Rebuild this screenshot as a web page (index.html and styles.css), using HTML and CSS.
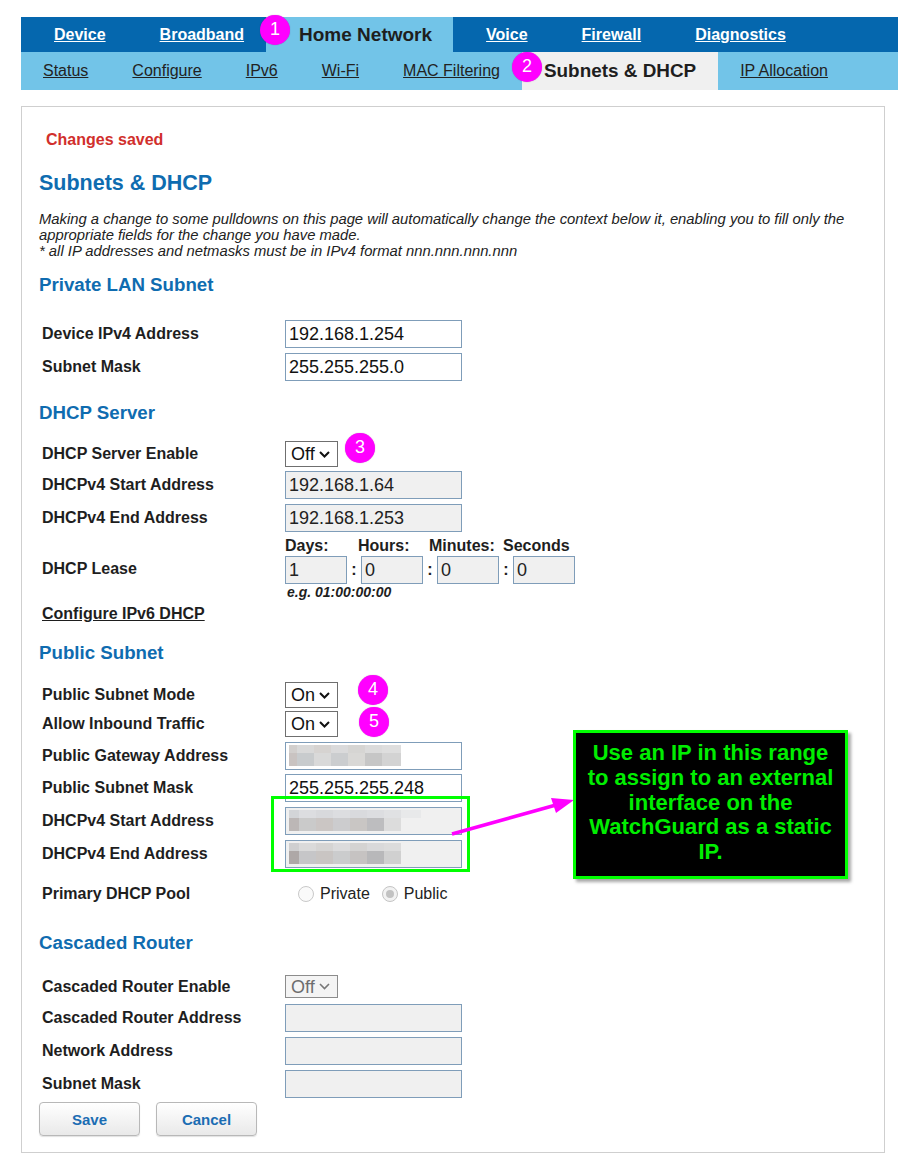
FILE: index.html
```html
<!DOCTYPE html>
<html>
<head>
<meta charset="utf-8">
<title>Subnets &amp; DHCP</title>
<link rel="stylesheet" href="styles.css">
</head>
<body>
<div class="page">
  <nav class="topnav">
    <a class="tn" href="#">Device</a>
    <a class="tn tn-pre" href="#">Broadband</a>
    <span class="tn tn-active">Home Network</span>
    <a class="tn" href="#">Voice</a>
    <a class="tn" href="#">Firewall</a>
    <a class="tn" href="#">Diagnostics</a>
  </nav>
  <nav class="subnav">
    <a class="sn" href="#">Status</a>
    <a class="sn" href="#">Configure</a>
    <a class="sn" href="#">IPv6</a>
    <a class="sn" href="#">Wi-Fi</a>
    <a class="sn" href="#">MAC Filtering</a>
    <span class="sn sn-active">Subnets &amp; DHCP</span>
    <a class="sn" href="#">IP Allocation</a>
  </nav>

  <main class="panel">
    <div class="msg">Changes saved</div>
    <h1 class="title">Subnets &amp; DHCP</h1>
    <p class="intro">Making a change to some pulldowns on this page will automatically change the context below it, enabling you to fill only the appropriate fields for the change you have made.<br>* all IP addresses and netmasks must be in IPv4 format nnn.nnn.nnn.nnn</p>

    <h2 class="sh sh-private">Private LAN Subnet</h2>
    <div class="row row-first1">
      <div class="lbl">Device IPv4 Address</div>
      <div class="inp">192.168.1.254</div>
    </div>
    <div class="row">
      <div class="lbl">Subnet Mask</div>
      <div class="inp">255.255.255.0</div>
    </div>

    <h2 class="sh sh-dhcp">DHCP Server</h2>
    <div class="row row-first2">
      <div class="lbl">DHCP Server Enable</div>
      <div class="sel">Off<svg class="chev" width="11" height="7" viewBox="0 0 11 7"><polyline points="1,1 5.5,5.5 10,1" fill="none" stroke="#111" stroke-width="2"/></svg></div>
    </div>
    <div class="row row-g4">
      <div class="lbl">DHCPv4 Start Address</div>
      <div class="inp dis">192.168.1.64</div>
    </div>
    <div class="row">
      <div class="lbl">DHCPv4 End Address</div>
      <div class="inp dis">192.168.1.253</div>
    </div>
    <div class="row">
      <div class="lbl">DHCP Lease</div>
      <div class="lease">
        <div class="lease-heads">
          <span class="lh lh-d">Days:</span><span class="lh lh-h">Hours:</span><span class="lh lh-m">Minutes:</span><span class="lh">Seconds</span>
        </div>
        <div class="lease-inputs">
          <div class="inp dis small">1</div><span class="colon">:</span>
          <div class="inp dis small">0</div><span class="colon">:</span>
          <div class="inp dis small">0</div><span class="colon">:</span>
          <div class="inp dis small">0</div>
        </div>
        <div class="eg">e.g. 01:00:00:00</div>
      </div>
    </div>
    <div class="cfg"><a href="#">Configure IPv6 DHCP</a></div>

    <h2 class="sh sh-public">Public Subnet</h2>
    <div class="row row-first3">
      <div class="lbl">Public Subnet Mode</div>
      <div class="sel">On<svg class="chev" width="11" height="7" viewBox="0 0 11 7"><polyline points="1,1 5.5,5.5 10,1" fill="none" stroke="#111" stroke-width="2"/></svg></div>
    </div>
    <div class="row row-g3">
      <div class="lbl">Allow Inbound Traffic</div>
      <div class="sel">On<svg class="chev" width="11" height="7" viewBox="0 0 11 7"><polyline points="1,1 5.5,5.5 10,1" fill="none" stroke="#111" stroke-width="2"/></svg></div>
    </div>
    <div class="row row-g5">
      <div class="lbl">Public Gateway Address</div>
      <div class="inp">
        <svg class="mosaic" width="112" height="21" viewBox="0 0 112 21">
          <rect x="0" y="0" width="8" height="8" fill="#d2cfcd"/><rect x="8" y="0" width="17" height="8" fill="#d9d9d9"/><rect x="25" y="0" width="17" height="8" fill="#d6d3d1"/><rect x="42" y="0" width="17" height="8" fill="#dadadb"/><rect x="59" y="0" width="17" height="8" fill="#d6d5d3"/><rect x="76" y="0" width="17" height="8" fill="#dbdbdb"/><rect x="93" y="0" width="19" height="8" fill="#dedede"/>
          <rect x="0" y="8" width="8" height="13" fill="#c9c3c1"/><rect x="8" y="8" width="17" height="13" fill="#c8cbcd"/><rect x="25" y="8" width="17" height="13" fill="#d9d9d9"/><rect x="42" y="8" width="17" height="13" fill="#cbcdcf"/><rect x="59" y="8" width="17" height="13" fill="#d9d8d6"/><rect x="76" y="8" width="17" height="13" fill="#c6c6c6"/><rect x="93" y="8" width="19" height="13" fill="#d3d3d3"/>
        </svg>
      </div>
    </div>
    <div class="row row-g4">
      <div class="lbl">Public Subnet Mask</div>
      <div class="inp">255.255.255.248</div>
    </div>
    <div class="row">
      <div class="lbl">DHCPv4 Start Address</div>
      <div class="inp dis">
        <svg class="mosaic" width="132" height="21" viewBox="0 0 132 21">
          <rect x="0" y="0" width="10" height="8" fill="#d3d5d8"/><rect x="10" y="0" width="17" height="8" fill="#dcdde0"/><rect x="27" y="0" width="17" height="8" fill="#d8d9dc"/><rect x="44" y="0" width="17" height="8" fill="#dcdde0"/><rect x="61" y="0" width="17" height="8" fill="#d9dadd"/><rect x="78" y="0" width="17" height="8" fill="#dcdde0"/><rect x="95" y="0" width="17" height="8" fill="#e0e1e3"/><rect x="112" y="0" width="20" height="8" fill="#e8e9ea"/>
          <rect x="0" y="8" width="10" height="13" fill="#bcb7b6"/><rect x="10" y="8" width="17" height="13" fill="#cacaca"/><rect x="27" y="8" width="17" height="13" fill="#cbc6c4"/><rect x="44" y="8" width="17" height="13" fill="#ccccce"/><rect x="61" y="8" width="17" height="13" fill="#c9c6c4"/><rect x="78" y="8" width="17" height="13" fill="#bdbdbf"/><rect x="95" y="8" width="17" height="13" fill="#dcdcdc"/>
        </svg>
      </div>
    </div>
    <div class="row">
      <div class="lbl">DHCPv4 End Address</div>
      <div class="inp dis">
        <svg class="mosaic" width="112" height="21" viewBox="0 0 112 21">
          <rect x="0" y="0" width="10" height="8" fill="#cfcfd0"/><rect x="10" y="0" width="17" height="8" fill="#dadada"/><rect x="27" y="0" width="17" height="8" fill="#d5d4d3"/><rect x="44" y="0" width="17" height="8" fill="#dbdbdc"/><rect x="61" y="0" width="17" height="8" fill="#d4d3d2"/><rect x="78" y="0" width="17" height="8" fill="#d9d9da"/><rect x="95" y="0" width="17" height="8" fill="#dcdcdc"/>
          <rect x="0" y="8" width="10" height="13" fill="#aea8a7"/><rect x="10" y="8" width="17" height="13" fill="#c6c6c8"/><rect x="27" y="8" width="17" height="13" fill="#c9c5c3"/><rect x="44" y="8" width="17" height="13" fill="#cbcccd"/><rect x="61" y="8" width="17" height="13" fill="#c6c3c2"/><rect x="78" y="8" width="17" height="13" fill="#b8b8ba"/><rect x="95" y="8" width="17" height="13" fill="#d0d0d0"/>
        </svg>
      </div>
    </div>
    <div class="row row-pool">
      <div class="lbl">Primary DHCP Pool</div>
      <div class="pool">
        <span class="radio"></span><span class="rtext">Private</span>
        <span class="radio checked"></span><span class="rtext">Public</span>
      </div>
    </div>

    <h2 class="sh sh-casc">Cascaded Router</h2>
    <div class="row row-first4">
      <div class="lbl">Cascaded Router Enable</div>
      <div class="sel sel-dis">Off<svg class="chev" width="11" height="7" viewBox="0 0 11 7"><polyline points="1,1 5.5,5.5 10,1" fill="none" stroke="#777" stroke-width="1.6"/></svg></div>
    </div>
    <div class="row row-g6">
      <div class="lbl">Cascaded Router Address</div>
      <div class="inp dis"></div>
    </div>
    <div class="row">
      <div class="lbl">Network Address</div>
      <div class="inp dis"></div>
    </div>
    <div class="row">
      <div class="lbl">Subnet Mask</div>
      <div class="inp dis"></div>
    </div>
    <div class="buttons">
      <button class="btn">Save</button>
      <button class="btn">Cancel</button>
    </div>
  </main>

  <div class="badge b1">1</div>
  <div class="badge b2">2</div>
  <div class="badge b3">3</div>
  <div class="badge b4">4</div>
  <div class="badge b5">5</div>

  <div class="hl-box"></div>
  <svg class="arrow" width="140" height="60" viewBox="440 790 140 60">
    <line x1="452" y1="834" x2="556" y2="805" stroke="#ff00ff" stroke-width="3.5"/>
    <polygon points="574,800 551,798 556,813" fill="#ff00ff"/>
  </svg>
  <div class="callout">Use an IP in this range<br>to assign to an external<br>interface on the<br>WatchGuard as a static<br>IP.</div>
</div>
</body>
</html>
```

FILE: styles.css
```css
* { box-sizing: border-box; }
html, body { margin: 0; padding: 0; background: #fff; }
body { font-family: "Liberation Sans", Arial, sans-serif; color: #222; }
.page { position: relative; width: 898px; min-height: 1169px; padding-top: 17px; }

/* top navigation */
.topnav {
  display: flex; height: 35px; margin-left: 21px; padding-left: 6px;
  background: #0567ae;
}
.tn {
  padding: 0 27px; line-height: 35px; color: #fff; font-weight: bold;
  font-size: 16px; text-decoration: underline; white-space: nowrap;
}
.tn-pre { padding-right: 22px; }
.tn-active {
  background: #72c4e8; color: #1e1e1e; font-size: 19px; text-decoration: none;
  padding: 0 21px 0 33px; margin-right: 6px;
}
.subnav {
  display: flex; height: 38px; margin-left: 21px; background: #72c4e8;
}
.sn {
  padding: 0 22px; line-height: 38px; color: #222; font-size: 16px;
  text-decoration: underline; white-space: nowrap;
}
.sn-active {
  background: #f0f0f0; font-weight: bold; font-size: 18.9px; padding: 0 22px;
  text-decoration: none; color: #1e1e1e;
}

/* panel */
.panel {
  margin: 16px 0 0 21px; width: 864px; border: 1px solid #cfcfcf;
  padding: 0 17px 16px 17px;
}
.msg {
  margin-top: 24px; padding-left: 7px; color: #d12f2c; font-weight: bold;
  font-size: 16px; line-height: 18px;
}
.title {
  margin: 21px 0 0 0; color: #0f6cb0; font-size: 21.5px; line-height: 26px; font-weight: bold;
}
.intro {
  margin: 15px 0 0 0; font-style: italic; font-size: 14.8px; line-height: 16px; color: #222;
}
.sh {
  margin: 0; color: #0f6cb0; font-size: 18.7px; line-height: 22px; font-weight: bold;
}
.sh-private { margin-top: 15px; }
.sh-dhcp { margin-top: 21px; }
.sh-public { margin-top: 19px; }
.sh-casc { margin-top: 28px; }

.row { display: flex; align-items: center; margin-top: 5px; }
.row-first1 { margin-top: 24px; }
.row-first2 { margin-top: 17px; }
.row-first3 { margin-top: 18px; }
.row-first4 { margin-top: 21px; }
.row-g3 { margin-top: 3px; }
.row-g4 { margin-top: 4px; }
.row-g5 { margin-top: 5px; }
.row-g6 { margin-top: 6px; }
.row-pool { margin-top: 16px; height: 20px; }

.lbl {
  width: 246px; padding-left: 3px; font-weight: bold; font-size: 16px;
  line-height: 18px; color: #1e1e1e; flex: none;
}
.inp {
  width: 177px; height: 28px; border: 1px solid #7f9db9; background: #fff;
  font-size: 18px; line-height: 26px; padding-left: 3px; color: #111;
  overflow: hidden; flex: none;
}
.inp.dis { background: #f0f0f0; color: #222; }
.inp.small { width: 62px; }
.mosaic { display: block; margin-top: 2px; }

.sel {
  display: flex; align-items: center; width: 53px; height: 26px;
  border: 1px solid #6f6f6f; background: #fff; font-size: 18px; line-height: 24px;
  padding-left: 5px; color: #111;
}
.sel .chev { margin-left: 4px; }
.sel-dis { height: 23px; color: #6d6d6d; border-color: #8c8c8c; background: #f4f4f4; }

/* lease */
.lease { display: flex; flex-direction: column; }
.lease-heads { display: flex; height: 18px; margin-bottom: 1px; }
.lh { font-weight: bold; font-size: 16px; line-height: 18px; color: #1e1e1e; white-space: nowrap; }
.lh-d { width: 73px; }
.lh-h { width: 71px; }
.lh-m { width: 74px; }
.lease-inputs { display: flex; align-items: center; }
.colon { width: 14px; text-align: center; font-weight: bold; font-size: 16px; }
.eg { font-weight: bold; font-style: italic; font-size: 14px; line-height: 16px; padding-left: 2px; color: #1e1e1e; }

.cfg { margin-top: 5px; padding-left: 3px; line-height: 18px; }
.cfg a { color: #1e1e1e; font-weight: bold; font-size: 16px; text-decoration: underline; }

.pool { display: flex; align-items: center; padding-left: 13px; }
.radio {
  width: 16px; height: 16px; border-radius: 50%; border: 1px solid #c9c9c9;
  background: #fafafa; display: inline-block; position: relative;
}
.radio.checked { border-color: #c4c4c4; background: #f2f2f2; }
.radio.checked::after {
  content: ""; position: absolute; left: 3px; top: 3px; width: 8px; height: 8px;
  border-radius: 50%; background: #c2c2c2;
}
.rtext { font-size: 16px; line-height: 20px; margin-left: 6px; margin-right: 12px; color: #222; }

.buttons { display: flex; gap: 16px; margin-top: 4px; }
.btn {
  width: 101px; height: 34px; border: 1px solid #b8b8b8; border-radius: 4px;
  background: linear-gradient(#ffffff, #e9e9e9);
  color: #1b6db3; font-family: "Liberation Sans", Arial, sans-serif;
  font-weight: bold; font-size: 15px; box-shadow: 0 1px 1px rgba(0,0,0,0.12);
}

/* annotations */
.badge {
  position: absolute; width: 30px; height: 30px; border-radius: 50%;
  background: #ff00ff; color: #fff; font-size: 18px; line-height: 28px;
  text-align: center; box-shadow: 0 0 1px rgba(120,0,120,0.5);
}
.b1 { left: 260px; top: 15px; }
.b2 { left: 512px; top: 52px; }
.b3 { left: 345px; top: 433px; }
.b4 { left: 358px; top: 675px; }
.b5 { left: 359px; top: 707px; }

.hl-box {
  position: absolute; left: 271px; top: 796px; width: 199px; height: 76px;
  border: 3px solid #00ff00;
}
.arrow { position: absolute; left: 440px; top: 790px; }
.callout {
  position: absolute; left: 573px; top: 730px; width: 275px; height: 149px;
  background: #000; border: 3px solid #00ff00; color: #00ee00;
  font-weight: bold; font-size: 22px; line-height: 24.8px; text-align: center;
  padding-top: 8px; box-shadow: 3px 3px 3px rgba(0,0,0,0.35);
}
```
